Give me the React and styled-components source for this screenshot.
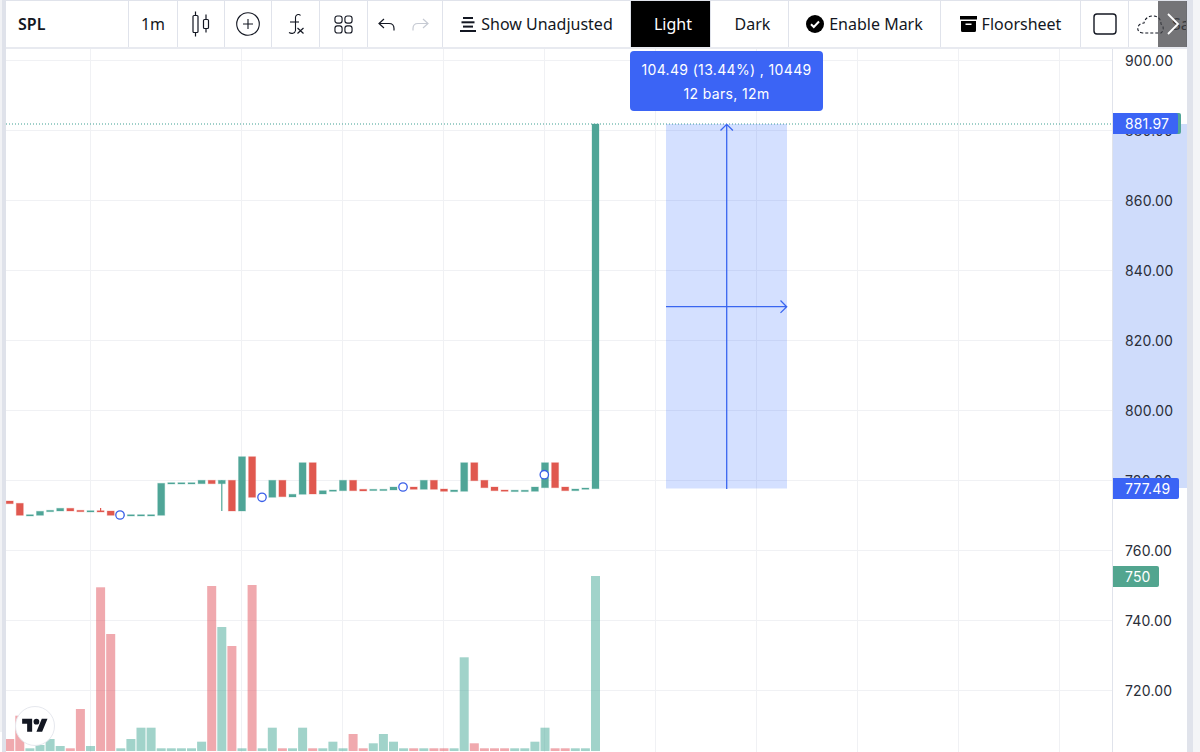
import React from 'react'
import styled, { createGlobalStyle } from 'styled-components';

const GlobalStyle = createGlobalStyle`
  html, body { margin: 0; padding: 0; background: #f4f5f7; }
  * { box-sizing: border-box; }
`;

const Page = styled.div`
  display: flex;
  width: 1200px;
  height: 752px;
  overflow: hidden;
  color: #131722;
  background: #f4f5f7;
`;

const LeftStrip = styled.div`
  display: flex;
  flex-direction: column;
  justify-content: flex-end;
  flex: 0 0 6px;
  background: #dfe2ea;
  border-left: 2px solid #f1f2f5;
`;

const ScrollNub = styled.div`
  width: 2px;
  height: 20px;
  margin-left: -2px;
  background: #fff;
`;

const Main = styled.div`
  display: flex;
  flex-direction: column;
  flex: 0 0 1181px;
  min-width: 0;
  background: #fff;
`;

const RightStrip = styled.div`
  flex: 0 0 6px;
  background: #e0e3eb;
`;

const Toolbar = styled.div`
  position: relative;
  display: flex;
  flex: 0 0 49px;
  border-top: 1px solid #e0e3eb;
  border-bottom: 2px solid #e8eaf0;
  overflow: hidden;
  font-family: "Noto Sans", sans-serif;
  font-size: 16px;
`;

const Cell = styled.div`
  display: flex;
  align-items: center;
  justify-content: ${props => props.$start ? 'flex-start' : 'center'};
  gap: ${props => props.$gap || 5}px;
  flex: 0 0 ${props => props.$w}px;
  min-width: 0;
  overflow: hidden;
  padding-left: ${props => props.$pl || 0}px;
  padding-right: ${props => props.$pr || 0}px;
  border-right: 1px solid #e0e3eb;
  white-space: nowrap;
  background: ${props => props.$dark ? '#000' : 'transparent'};
  color: ${props => props.$dark ? '#fff' : 'inherit'};

  svg {
    flex-shrink: 0;
  }
`;

const Symbol = styled.span`
  font-weight: 600;
`;

const ScrollButton = styled.div`
  position: absolute;
  top: 0;
  right: 0;
  display: flex;
  align-items: center;
  justify-content: center;
  width: 29px;
  height: 46px;
  background: rgba(70, 70, 74, 0.75);
`;

const ChartRow = styled.div`
  display: flex;
  flex: 1;
  min-height: 0;
`;

const Pane = styled.div`
  position: relative;
  flex: 0 0 1106px;
  overflow: hidden;
`;

const ChartSvg = styled.svg`
  display: block;
`;

const Tooltip = styled.div`
  position: absolute;
  left: 624px;
  top: 2px;
  width: 193px;
  padding: 7px 0 5px;
  border-radius: 4px;
  background: #3b64f5;
  color: #fff;
  font-family: Inter, sans-serif;
  font-size: 14px;
  letter-spacing: 0.35px;
  line-height: 24px;
  text-align: center;
`;

const LogoBadge = styled.div`
  position: absolute;
  left: 9px;
  bottom: 6px;
  display: flex;
  align-items: center;
  justify-content: center;
  width: 40px;
  height: 40px;
  border-radius: 50%;
  border: 1px solid #e6e8ee;
  background: #fff;
`;

const PriceAxis = styled.div`
  position: relative;
  flex: 0 0 75px;
  border-left: 1px solid #e0e3eb;
  overflow: hidden;
  font-family: Inter, sans-serif;
  font-size: 14px;
  letter-spacing: 0.15px;
`;

const Labels = styled.div`
  position: relative;
  z-index: 1;
  margin-top: -23px;
`;

const PriceLabel = styled.div`
  height: 70px;
  line-height: 70px;
  padding-left: 12px;
  color: #2a2e39;
`;

const AxisBand = styled.div`
  position: absolute;
  left: 0;
  right: 0;
  top: 75px;
  height: 364px;
  background: #cfdcfb;
`;

const Badge = styled.div`
  position: absolute;
  z-index: 2;
  left: -1px;
  top: ${props => props.$top}px;
  width: ${props => props.$w}px;
  height: 21px;
  padding-left: 13px;
  border-radius: 0 2px 2px 0;
  background: ${props => props.$bg};
  box-shadow: ${props => props.$edge ? `3px 0 0 ${props.$edge}` : 'none'};
  color: #fff;
  line-height: 21px;
`;

const GRID_X = [90.5, 241.5, 342.5, 443.5, 544.5, 655.5, 756.5, 857.5, 958.5, 1059.5];
const GRID_Y = [60.5, 130.5, 200.5, 270.5, 340.5, 410.5, 480.5, 550.5, 620.5, 690.5];
const PRICES = ['900.00', '880.00', '860.00', '840.00', '820.00', '800.00', '780.00', '760.00', '740.00', '720.00'];

const UP = '#4fa597';
const DOWN = '#e0584f';

// [color, top, bottom, wick top, wick bottom]
const CANDLES = [
  ['r', 501, 503.7], ['r', 503.3, 515.3], ['g', 514.7, 516], ['g', 511.3, 515.3], ['g', 510.3, 511.7],
  ['g', 508.3, 511], ['r', 508.3, 511], ['r', 510.3, 511.7], ['g', 510.7, 512], ['r', 510.7, 512, 508, 512],
  ['r', 511, 515.3], ['g', 514.7, 516], ['g', 514.7, 516], ['g', 514.7, 516], ['g', 514.7, 516],
  ['g', 483.3, 515.3], ['g', 482.7, 484], ['g', 482.7, 484], ['g', 482.7, 484], ['g', 480.3, 483.7],
  ['r', 480.3, 483.7], ['g', 480.3, 483.7, 480.3, 511], ['r', 480.3, 511], ['g', 456.7, 511], ['r', 456.7, 497.3],
  ['g', 496.7, 498], ['g', 480.3, 497.3], ['r', 480.3, 496.7], ['g', 494.3, 497], ['g', 462.7, 494.3],
  ['r', 462.7, 494], ['g', 490.7, 494], ['g', 490, 491.3], ['g', 480.3, 490.7], ['r', 480.3, 490.7],
  ['r', 489.3, 491], ['g', 489.3, 490.6], ['g', 489.3, 490.6], ['g', 487, 490], ['g', 486.5, 488],
  ['r', 487, 489.3], ['g', 480.3, 489.3], ['r', 480.3, 489.3], ['r', 489, 491.3], ['g', 490, 491.7],
  ['g', 462.7, 491.3], ['r', 462.7, 480.7], ['r', 480.3, 487.7], ['r', 487, 490.7], ['r', 490, 491.3],
  ['g', 490.2, 491.6], ['g', 490.2, 491.6], ['g', 487, 491.3], ['g', 462.7, 487.7], ['r', 462.7, 487.7],
  ['r', 487, 490.7], ['g', 489, 490.7], ['g', 488, 489.3], ['g', 124, 488.7],
];

// [color, top] per bar, all bars end at the bottom of the chart
const VOLUMES = [
  ['r', 739], ['r', 715.7], ['g', 748.3], ['g', 745], ['g', 739], ['g', 746], ['r', 748.3], ['r', 709],
  ['g', 746], ['r', 587.3], ['r', 634], ['g', 748.3], ['g', 739], ['g', 727.7], ['g', 727.7], ['g', 748.3],
  ['g', 748.3], ['g', 748.3], ['g', 748.3], ['g', 741.7], ['r', 586], ['g', 627], ['r', 646], ['g', 748.3],
  ['r', 585], ['g', 748.3], ['g', 727.7], ['r', 748.3], ['g', 748.3], ['g', 727.7], ['r', 748.3], ['g', 748.3],
  ['g', 741.7], ['g', 748.3], ['r', 734], ['r', 748.3], ['g', 743.3], ['g', 734], ['g', 741.7], ['g', 748.3],
  ['r', 748.3], ['g', 748.3], ['r', 748.3], ['r', 748.3], ['g', 748.3], ['g', 657.3], ['r', 743.3], ['r', 748.3],
  ['r', 748.3], ['r', 748.3], ['g', 748.3], ['g', 748.3], ['g', 741.7], ['g', 727.7], ['r', 748.3], ['r', 748.3],
  ['g', 748.3], ['g', 748.3], ['g', 576],
];

const MARKERS = [[120, 515], [262, 497.3], [403, 487], [544.3, 474.7]];

const barX = i => 9.7 + 10.1 * i;

function Chart() {
  return (
    <ChartSvg width="1106" height="703" viewBox="6 49 1106 703">
      {GRID_X.map(x => <line key={x} x1={x} x2={x} y1="49" y2="752" stroke="#f0f1f4" />)}
      {GRID_Y.map(y => <line key={y} x1="6" x2="1112" y1={y} y2={y} stroke="#f0f1f4" />)}

      {VOLUMES.map(([c, top], i) => (
        <rect key={i} x={barX(i) - 4.5} y={top} width="9" height={751 - top}
          fill={c === 'g' ? 'rgba(78, 172, 155, 0.53)' : 'rgba(226, 84, 94, 0.5)'} />
      ))}

      <line x1="6" x2="1112" y1="124" y2="124" stroke="#3f9f92" strokeDasharray="1 2" />

      <rect x="666" y="124" width="121" height="364.5" fill="rgba(41, 98, 255, 0.2)" />
      <g stroke="#3a66f0" strokeWidth="1.3" fill="none">
        <path d="M726.7 489V124.5M720.5 130.5l6.2-6.2 6.2 6.2" />
        <path d="M666 306.7h121M780.5 300.5l6.2 6.2-6.2 6.2" />
      </g>

      {CANDLES.map(([c, top, bottom, wickTop, wickBottom], i) => {
        const color = c === 'g' ? UP : DOWN;
        return (
          <g key={i}>
            {wickTop && <line x1={barX(i)} x2={barX(i)} y1={wickTop} y2={wickBottom} stroke={color} strokeWidth="1.2" />}
            <rect x={barX(i) - 3.5} y={top} width="7" height={bottom - top} fill={color}
              stroke={color} strokeOpacity="0.3" />
          </g>
        );
      })}

      {MARKERS.map(([x, y]) => (
        <circle key={x} cx={x} cy={y} r="4.2" fill="#fff" stroke="#3a5fe8" strokeWidth="1.3" />
      ))}
    </ChartSvg>
  );
}

const CandleIcon = () => (
  <svg width="20" height="26" viewBox="0 0 20 26" fill="none" stroke="#131722" strokeWidth="1.2">
    <rect x="2" y="4.5" width="5" height="17" rx="1" />
    <path d="M4.500 0.500v4M4.500 21.500v4" />
    <rect x="12.500" y="8.500" width="5" height="9" rx="1" />
    <path d="M15 3.500v5M15 17.500v4" />
  </svg>
);

const PlusIcon = () => (
  <svg width="24" height="24" viewBox="0 0 24 24" fill="none" stroke="#131722" strokeWidth="1.1">
    <circle cx="12" cy="12" r="11.3" />
    <path d="M12 7v10M7 12h10" />
  </svg>
);

const FxIcon = () => (
  <svg width="20" height="22" viewBox="0 0 20 22" fill="none" stroke="#131722" strokeWidth="1.1">
    <path d="M14.500 2.500c-1-1.500-4.500-1.500-5 1.500V17.500c-.5 3-4 3.500-6.500 2" />
    <path d="M4 9h9" />
    <path d="M11.500 15l6 5.500M17.500 15l-6 5.500" strokeWidth="1.200" />
  </svg>
);

const GridIcon = () => (
  <svg width="19" height="19" viewBox="0 0 20 20" fill="none" stroke="#131722" strokeWidth="1.2">
    <rect x="1" y="1" width="7.500" height="7.500" rx="2.500" />
    <rect x="11.500" y="1" width="7.500" height="7.500" rx="2.500" />
    <rect x="1" y="11.500" width="7.500" height="7.500" rx="2.500" />
    <rect x="11.500" y="11.500" width="7.500" height="7.500" rx="2.500" />
  </svg>
);

const UndoIcon = ({ flip, color }) => (
  <svg width="17" height="13" viewBox="0 0 17 13" fill="none" stroke={color} strokeWidth="1.200"
    style={flip ? { transform: 'scaleX(-1)' } : undefined}>
    <path d="M6 1L1 5.500l5 4.500" />
    <path d="M1 5.500h10c3 0 5 2 5 5v2" />
  </svg>
);

const StackIcon = () => (
  <svg width="16" height="15" viewBox="0 0 16 15" fill="#131722">
    <rect x="3" y="0" width="10" height="2" />
    <rect x="1.500" y="4.300" width="13" height="2" />
    <rect x="3" y="8.600" width="10" height="2" />
    <rect x="0" y="13" width="16" height="2" />
  </svg>
);

const CheckIcon = () => (
  <svg width="18" height="18" viewBox="0 0 18 18">
    <circle cx="9" cy="9" r="9" fill="#000" />
    <path d="M5 9.200l2.800 2.800L13 6.500" fill="none" stroke="#fff" strokeWidth="2" />
  </svg>
);

const ArchiveIcon = () => (
  <svg width="17" height="16" viewBox="0 0 17 16" fill="#000">
    <path d="M0 0h17v3.500H0z" />
    <path d="M1 5h15v9.500a1.500 1.500 0 0 1-1.500 1.500h-12A1.500 1.500 0 0 1 1 14.500zM5.500 7.500v1.500h6V7.500z" fillRule="evenodd" />
  </svg>
);

const SquareIcon = () => (
  <svg width="24" height="22" viewBox="0 0 24 22" fill="none" stroke="#131722" strokeWidth="1.400">
    <rect x="1" y="1" width="22" height="20" rx="3" />
  </svg>
);

const CloudIcon = () => (
  <svg width="28" height="19" viewBox="0 0 28 19" fill="none" stroke="#131722" strokeWidth="1.100" strokeDasharray="3 2">
    <path d="M6 18C2 18 0 15 1 12c1-3 4-4 6-4C8 3 12 1 16 1c5 0 8 3 8 8 3 2 3 7 0 9z" />
  </svg>
);

const Chevron = () => (
  <svg width="14" height="24" viewBox="0 0 14 24" fill="none" stroke="#fff" strokeWidth="1.800">
    <path d="M2 2l10 10L2 22" />
  </svg>
);

const TvLogo = () => (
  <svg width="26" height="20" viewBox="0 0 36 28" fill="#131722">
    <path d="M14 22H7V11H0V4h14v18zM28 22h-8l7.500-18h8L28 22z" />
    <circle cx="20" cy="8" r="4" />
  </svg>
);

function App() {
  return (
    <Page>
      <GlobalStyle />
      <LeftStrip><ScrollNub /></LeftStrip>
      <Main>
        <Toolbar>
          <Cell $w={123} $start $pl={12}><Symbol>SPL</Symbol></Cell>
          <Cell $w={49}>1m</Cell>
          <Cell $w={47}><CandleIcon /></Cell>
          <Cell $w={47}><PlusIcon /></Cell>
          <Cell $w={48}><FxIcon /></Cell>
          <Cell $w={48}><GridIcon /></Cell>
          <Cell $w={75} $gap={17} $pr={4}>
            <UndoIcon color="#131722" />
            <UndoIcon flip color="#c6cad3" />
          </Cell>
          <Cell $w={188}><StackIcon />Show Unadjusted</Cell>
          <Cell $w={80} $dark $pl={5}>Light</Cell>
          <Cell $w={78} $pl={6}>Dark</Cell>
          <Cell $w={152}><CheckIcon />Enable Mark</Cell>
          <Cell $w={140}><ArchiveIcon />Floorsheet</Cell>
          <Cell $w={48}><SquareIcon /></Cell>
          <Cell $w={58} $start $pl={8} $gap={7}><CloudIcon />Save</Cell>
          <ScrollButton><Chevron /></ScrollButton>
        </Toolbar>
        <ChartRow>
          <Pane>
            <Chart />
            <Tooltip>
              <div>104.49 (13.44%) , 10449</div>
              <div>12 bars, 12m</div>
            </Tooltip>
            <LogoBadge><TvLogo /></LogoBadge>
          </Pane>
          <PriceAxis>
            <AxisBand />
            <Labels>
              {PRICES.map(p => <PriceLabel key={p}>{p}</PriceLabel>)}
            </Labels>
            <Badge $top={64} $w={66} $bg="#3b64f5" $edge="#4fa597">881.97</Badge>
            <Badge $top={429} $w={67} $bg="#3b64f5">777.49</Badge>
            <Badge $top={517} $w={47} $bg="#52a58f">750</Badge>
          </PriceAxis>
        </ChartRow>
      </Main>
      <RightStrip />
    </Page>
  );
}

export default App;
